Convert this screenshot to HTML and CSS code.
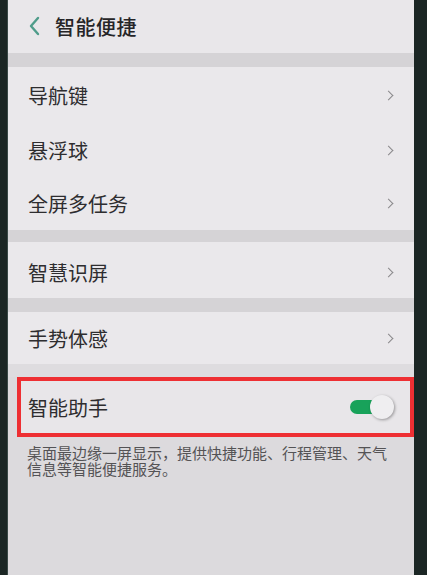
FILE: index.html
```html
<!DOCTYPE html>
<html lang="zh-CN">

<head>
  <meta charset="UTF-8">
  <meta name="viewport" content="width=device-width, initial-scale=1.0">
  <title>智能便捷</title>
  <link rel="stylesheet" href="styles.css">
</head>

<body>
  <div class="phone">
    <!-- header -->
    <div class="header">
      <svg class="back" width="12" height="20" viewBox="0 0 12 20">
        <path d="M10 2 L3 10 L10 18" fill="none" stroke="#4f9c8a" stroke-width="2.4" stroke-linecap="round" stroke-linejoin="round" />
      </svg>
      <span class="title">智能便捷</span>
    </div>

    <div class="band"></div>

    <!-- group 1 -->
    <div class="group">
      <div class="item item-first"><span>导航键</span><i class="arrow"></i></div>
      <div class="item"><span>悬浮球</span><i class="arrow"></i></div>
      <div class="item item-last"><span>全屏多任务</span><i class="arrow"></i></div>
    </div>

    <div class="band band-thin"></div>

    <div class="group">
      <div class="item item-screen"><span>智慧识屏</span><i class="arrow"></i></div>
    </div>

    <div class="band"></div>

    <div class="group">
      <div class="item item-gesture"><span>手势体感</span><i class="arrow"></i></div>
    </div>

    <div class="band band-light"></div>

    <!-- assistant -->
    <div class="assist">
      <div class="assist-row">
        <span>智能助手</span>
        <div class="switch"><span class="knob"></span></div>
      </div>
    </div>
    <p class="desc">桌面最边缘一屏显示，提供快捷功能、行程管理、天气信息等智能便捷服务。</p>
  </div>
</body>

</html>
```

FILE: styles.css
```css
/* reset start */
html,
body {
  margin: 0;
  height: 100%;
}

body {
  background: #1b2624;
  font-family: "Noto Sans CJK SC", "Noto Sans", sans-serif;
  color: #2b2a2c;
}

/* reset end */

.phone {
  height: 575px;
  margin: 0 13px 0 7px;
  background: #dcdadd;
  border-left: 1px solid #3a4a47;
  overflow: hidden;
}

/* header start */
.header {
  height: 53px;
  display: flex;
  align-items: center;
  background: #e9e7ea;
  padding-left: 20px;
}

.header .back {
  margin-top: -1px;
}

.header .title {
  margin-left: 15px;
  font-size: 20px;
  font-weight: 500;
  color: #262527;
  letter-spacing: 0.5px;
}

/* header end */

.band {
  height: 14px;
  background: #d5d3d6;
}

.band-thin {
  height: 12px;
}

.band-light {
  height: 13px;
  background: #dedcdf;
}

/* list start */
.group {
  background: #eae8eb;
}

.item {
  height: 54px;
  display: flex;
  align-items: center;
  justify-content: space-between;
  padding: 0 20px 0 20px;
  font-size: 20px;
  color: #2e2d2f;
}

.item-first {
  height: 56px;
}

.item-last {
  height: 53px;
}

.item-screen {
  height: 52px;
  padding-top: 4px;
}

.item-gesture {
  height: 52px;
}

.arrow {
  width: 6px;
  height: 6px;
  border-top: 1.5px solid #8a888b;
  border-right: 1.5px solid #8a888b;
  transform: rotate(45deg);
  margin-right: 2px;
}

/* list end */

/* assistant start */
.assist {
  height: 52px;
  margin: 0 0 0 9px;
  border: 4px solid #ee2f33;
  background: #e8e6e9;
  width: 389px;
}

.assist-row {
  height: 100%;
  display: flex;
  align-items: center;
  justify-content: space-between;
  padding: 0 20px 0 7px;
  font-size: 20px;
  color: #2e2d2f;
}

.switch {
  position: relative;
  width: 38px;
  height: 14px;
  border-radius: 7px;
  background: #18a25a;
  margin-right: 2px;
}

.switch .knob {
  position: absolute;
  right: -6px;
  top: -5px;
  width: 24px;
  height: 24px;
  border-radius: 50%;
  background: #efeef0;
  box-shadow: 1px 1px 3px rgba(0, 0, 0, 0.35);
}

.desc {
  margin: 8px 16px 0 19px;
  font-size: 15px;
  line-height: 16px;
  color: #545355;
}

/* assistant end */
```
